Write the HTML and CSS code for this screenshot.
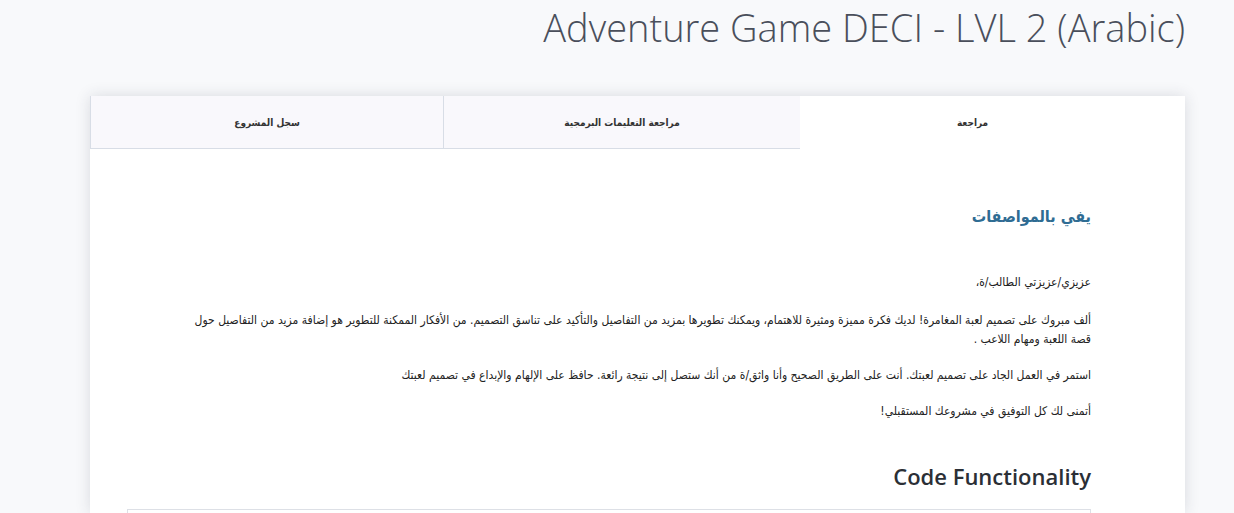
FILE: index.html
```html
<!DOCTYPE html>
<html lang="en">
<head>
<meta charset="utf-8">
<title>Adventure Game DECI - LVL 2 (Arabic)</title>
<link rel="stylesheet" href="styles.css">
</head>
<body>
<div class="page">
  <h1 class="title">Adventure Game DECI - LVL 2 (Arabic)</h1>
  <div class="card">
    <div class="tabs" dir="rtl">
      <div class="tab tab-review active">مراجعة</div>
      <div class="tab tab-code">مراجعة التعليمات البرمجية</div>
      <div class="tab tab-history">سجل المشروع</div>
    </div>
    <div class="content">
      <h2 class="verdict" dir="rtl">يفي بالمواصفات</h2>
      <div class="review" dir="rtl">
        <p>عزيزي/عزيزتي الطالب/ة،</p>
        <p>ألف مبروك على تصميم لعبة المغامرة! لديك فكرة مميزة ومثيرة للاهتمام، ويمكنك تطويرها بمزيد من التفاصيل والتأكيد على تناسق التصميم. من الأفكار الممكنة للتطوير هو إضافة مزيد من التفاصيل حول قصة اللعبة ومهام اللاعب .</p>
        <p>استمر في العمل الجاد على تصميم لعبتك. أنت على الطريق الصحيح وأنا واثق/ة من أنك ستصل إلى نتيجة رائعة. حافظ على الإلهام والإبداع في تصميم لعبتك</p>
        <p>أتمنى لك كل التوفيق في مشروعك المستقبلي!</p>
      </div>
      <h3 class="section">Code Functionality</h3>
      <div class="box"></div>
    </div>
  </div>
</div>
</body>
</html>
```

FILE: styles.css
```css
html, body {
  margin: 0;
  padding: 0;
  background: #f8f9fb;
  overflow: hidden;
}
.page {
  width: 1095px;
  margin-left: 90px;
}
.title {
  margin: 0;
  padding-top: 4px;
  height: 96px;
  box-sizing: border-box;
  text-align: right;
  font-family: "Open Sans", sans-serif;
  font-weight: 300;
  font-size: 38px;
  line-height: 46px;
  color: #4a4f5b;
}
.card {
  background: #fff;
  box-shadow: 0 0 14px rgba(40, 50, 70, 0.15);
  height: 417px;
  overflow: hidden;
}
.tabs {
  display: flex;
  width: 1055px;
  margin-right: auto;
  height: 53px;
}
.tab {
  display: flex;
  align-items: center;
  justify-content: center;
  background: #f9f8fc;
  border-bottom: 1px solid #d8dde6;
  border-left: 1px solid #d8dde6;
  font-family: "DejaVu Sans Condensed", "DejaVu Sans", sans-serif;
  font-weight: bold;
  font-size: 10px;
  color: #333;
  box-sizing: border-box;
}
.tab-review { flex: 0 0 345px; }
.tab-code { flex: 0 0 357px; }
.tab-history { flex: 0 0 353px; }
.tab.active {
  background: #fff;
  border-bottom-color: transparent;
  border-left: none;
}
.content {
  padding: 56px 94px 0 37px;
}
.verdict {
  margin: 0 0 44px;
  font-family: "DejaVu Sans Condensed", "DejaVu Sans", sans-serif;
  font-weight: bold;
  font-size: 16px;
  line-height: 24px;
  color: #2f6c93;
}
.review {
  padding-left: 60px;
  font-family: "DejaVu Sans Condensed", "DejaVu Sans", sans-serif;
  font-size: 12px;
  line-height: 19px;
  color: #222;
}
.review p {
  margin: 0 0 17px;
}
.review p:first-child {
  margin-bottom: 19px;
}
.section {
  margin: 40px 0 18px;
  text-align: right;
  font-family: "Open Sans", sans-serif;
  font-weight: 600;
  font-size: 22px;
  line-height: 30px;
  color: #2b2f36;
}
.box {
  border: 1px solid #dde0e6;
  height: 40px;
}
```
